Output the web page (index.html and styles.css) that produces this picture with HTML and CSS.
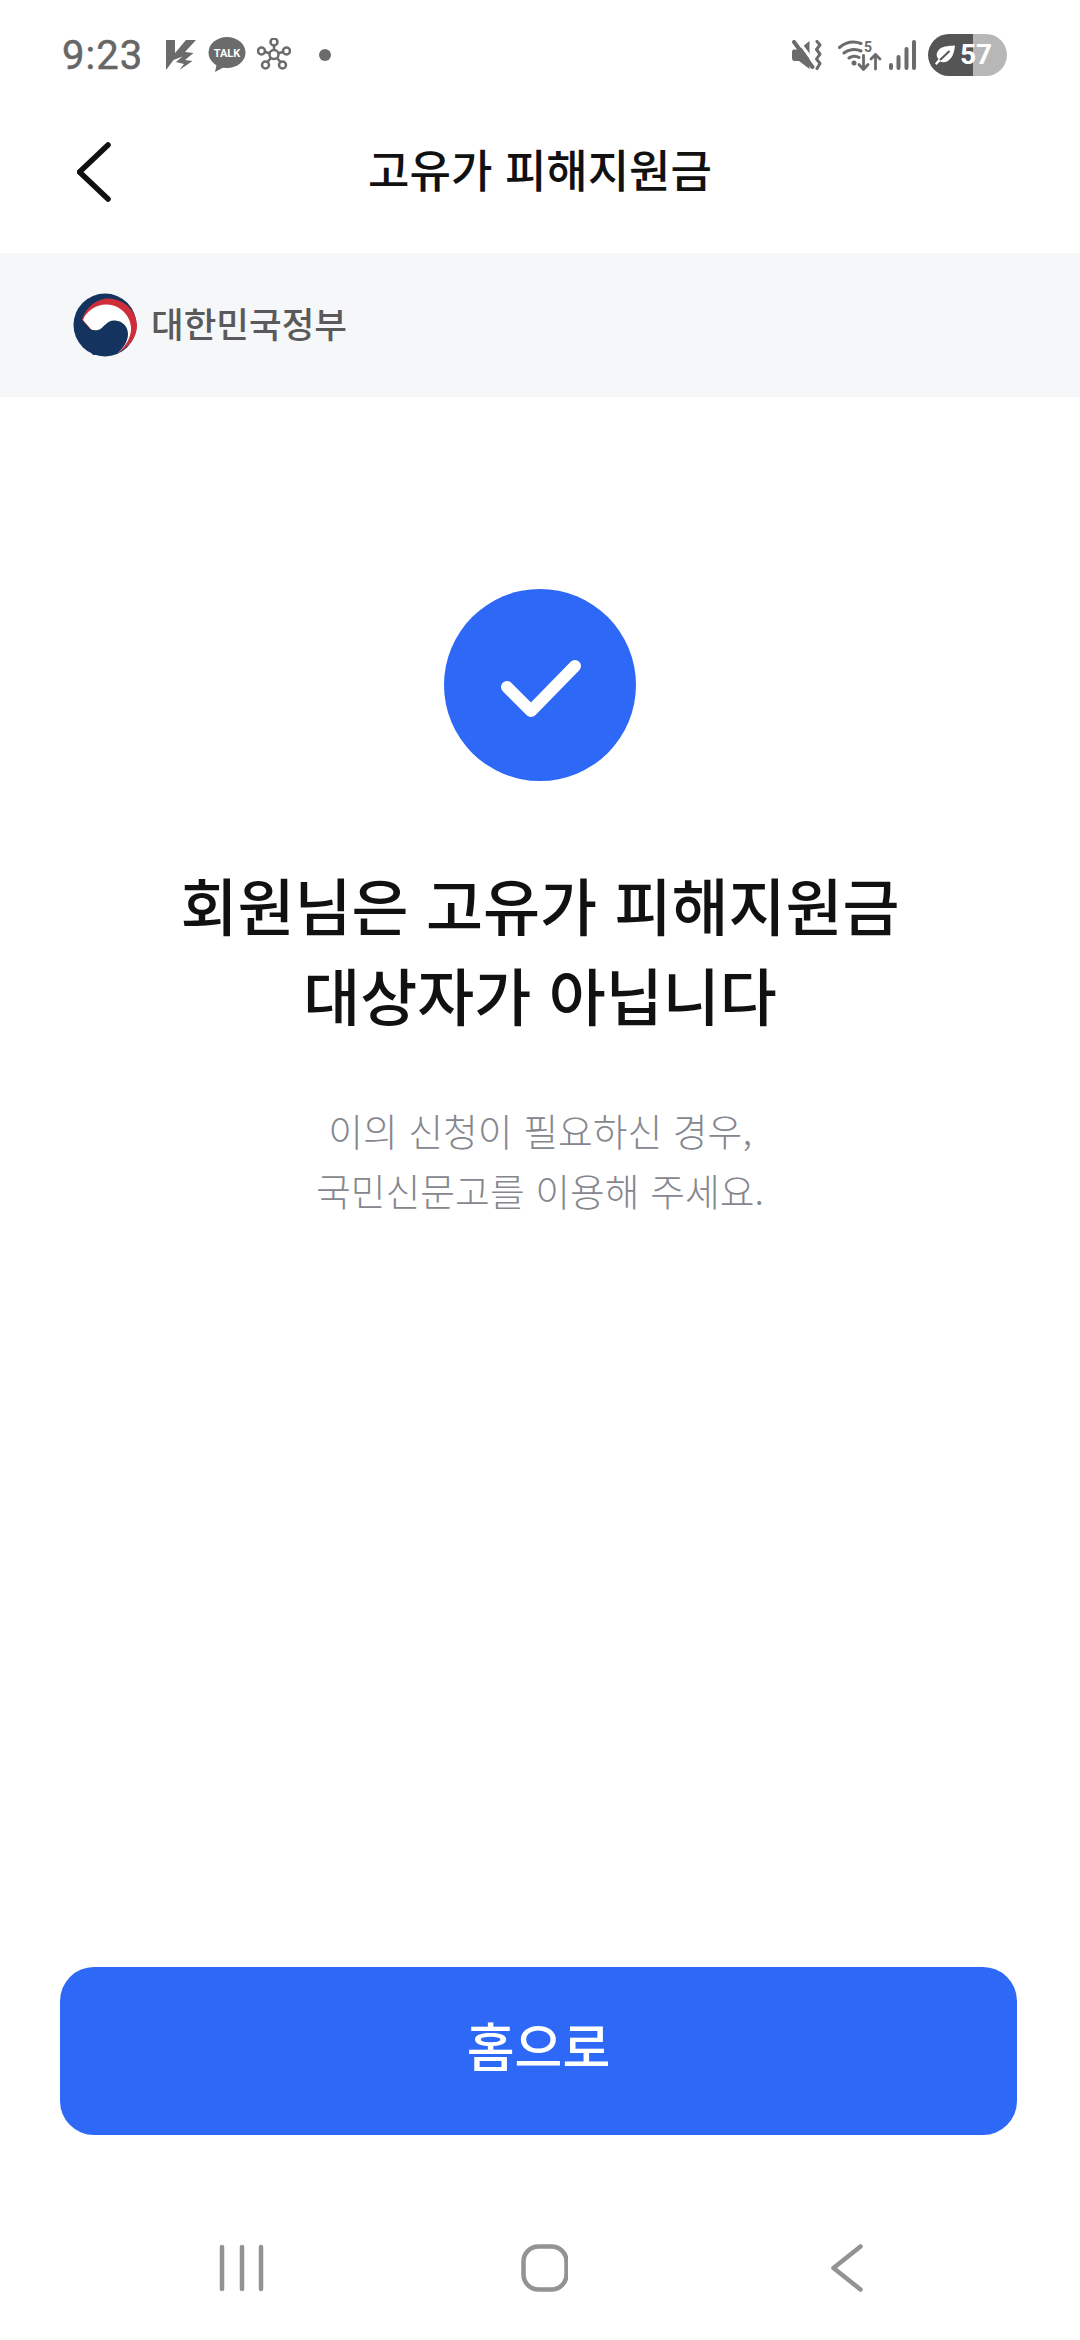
FILE: index.html
```html
<!DOCTYPE html>
<html lang="ko">
<head>
    <meta charset="UTF-8">
    <meta name="viewport" content="width=device-width, initial-scale=1.0">
    <title>고유가 피해지원금</title>
    <link rel="stylesheet" href="styles.css">
</head>
<body>
    <div class="status-bar">
        <span class="time">9:23</span>
        <svg class="st-bolt" width="30" height="30" viewBox="0 0 30 30">
            <path d="M0 0H9V13L20 0H30L19 12L27.500 13L19 20L26.500 21L13.500 30L18 24L10 22L16.500 16.500L7.500 20L0 30Z"/>
        </svg>
        <svg class="st-talk" width="38" height="36" viewBox="0 0 38 36">
            <ellipse cx="19" cy="15.500" rx="18.500" ry="15.500"/>
            <path d="M9 26L7 35L18 29Z"/>
            <text x="19" y="20" text-anchor="middle" class="talk-text">TALK</text>
        </svg>
        <svg class="st-hub" width="34" height="34" viewBox="0 0 34 34">
            <g class="hub-lines">
                <circle cx="17" cy="16.500" r="4.500"/>
                <circle cx="17" cy="4" r="3.500"/>
                <circle cx="4.500" cy="13" r="3.500"/>
                <circle cx="29.500" cy="13" r="3.500"/>
                <circle cx="8.500" cy="27" r="3.500"/>
                <circle cx="25.500" cy="27" r="3.500"/>
                <path d="M17 7.500V12M8 14L12.800 15.200M26 14L21.200 15.200M10.500 24L14 20M23.500 24L20 20"/>
            </g>
        </svg>
        <span class="st-dot"></span>
        <div class="status-right">
            <svg width="30" height="30" viewBox="0 0 30 30">
                <path d="M0 12C0 10 1 9.500 2.500 9.500H7L17.500 1V29L7 21H2.500C1 21 0 20 0 18Z"/>
                <path d="M5 -1L24 25" class="st-cut"/>
                <path d="M2 2L20.500 27" class="st-line"/>
                <path d="M25 1.500L28 5L24.500 9.500L28 14L24.500 19L28 23.500L25 28.500" class="st-line thin"/>
            </svg>
            <svg class="st-wifi" width="44" height="32" viewBox="0 0 44 32">
                <path d="M1.500 8.500C8 3 16 2 23 4.500M6 14C10 10.500 17 9.500 23 12M11 19C13.500 17 18 16.500 21 18.500" class="st-line thin"/>
                <circle cx="16" cy="24" r="2.500"/>
                <text x="26" y="12.500" class="wifi-five">5</text>
                <path d="M25.500 16.500V30M21 25.500L25.500 30.500L30 25.500" class="st-line arrow"/>
                <path d="M37.500 30V15.500M33 20L37.500 15.500L42 20" class="st-line arrow"/>
            </svg>
            <svg class="st-signal" width="27" height="30" viewBox="0 0 27 30">
                <rect x="0" y="23" width="4" height="7" rx="2"/>
                <rect x="7.500" y="15" width="4" height="15" rx="2"/>
                <rect x="15.500" y="7" width="4" height="23" rx="2"/>
                <rect x="23" y="0" width="4" height="30" rx="2"/>
            </svg>
            <div class="battery">
                <svg class="leaf" width="20" height="20" viewBox="0 0 20 20">
                    <path d="M20 0.500C13 1 6 1 3 6C1 9 1.500 12 3.500 14L0 18.500L1.500 20L5 16.500C9 18 13 17 16 13C18.500 10 19.500 5 20 0.500Z"/>
                    <path d="M14.500 6L5 15" class="leaf-vein"/>
                </svg>
                <span class="battery-num">57</span>
            </div>
        </div>
    </div>

    <header class="top-bar">
        <svg class="back-icon" width="34" height="60" viewBox="0 0 34 60">
            <path d="M31 3L2.500 30L31 57"/>
        </svg>
        <h1>고유가 피해지원금</h1>
    </header>

    <div class="gov-band">
        <svg class="gov-logo" width="64" height="64" viewBox="0 0 64 64">
            <circle cx="32" cy="32" r="31.500" fill="#14335f"/>
            <path d="M9 27C12 15 24 5 36 5.500C51 6 64 18 64 33C64 44 56 54 45 60L30 50Z" fill="#cd2e3a"/>
            <path d="M10 27C13 18 24 11 34 11.500C47 12 57 22 58 34C58.500 44 53 53 45 60L30 50Z" fill="#ffffff"/>
            <path d="M10 27C11 34 18 38.500 25 37C31 35.500 33 27 42 27.500C50 28 55 34 55 41C55 48 51 54 45 60L20 62L4 40Z" fill="#14335f"/>
        </svg>
        <span class="gov-name">대한민국정부</span>
    </div>

    <main class="result">
        <div class="check-circle">
            <svg width="192" height="192" viewBox="0 0 192 192">
                <path d="M63 98L87 122L131 77"/>
            </svg>
        </div>
        <h2>회원님은 고유가 피해지원금<br>대상자가 아닙니다</h2>
        <p>이의 신청이 필요하신 경우,<br>국민신문고를 이용해 주세요.</p>
    </main>

    <div class="bottom-action">
        <button type="button">홈으로</button>
    </div>

    <nav class="nav-bar">
        <svg width="48" height="48" viewBox="0 0 48 48">
            <path d="M4 3V45M24 3V45M43 3V45"/>
        </svg>
        <svg width="48" height="48" viewBox="0 0 48 48">
            <rect x="3.500" y="2.500" width="43" height="43" rx="15"/>
        </svg>
        <svg width="48" height="48" viewBox="0 0 48 48">
            <path d="M38.500 2.500L11.500 24L38.500 45.500"/>
        </svg>
    </nav>
</body>
</html>
```

FILE: styles.css
```css
* {
    box-sizing: border-box;
}
body {
    font-family: "Noto Sans CJK KR", "Noto Sans", sans-serif;
    display: flex;
    flex-direction: column;
    width: 1080px;
    height: 2340px;
    margin: 0;
    background-color: #ffffff;
    overflow: hidden;
}

/* status bar */
.status-bar {
    display: flex;
    align-items: center;
    height: 88px;
    padding: 22px 73px 0 62px;
    fill: #6b6b6b;
}
.time {
    width: 80px;
    font-family: Roboto, sans-serif;
    font-size: 40px;
    font-weight: 400;
    letter-spacing: 1px;
    color: #666666;
    -webkit-text-stroke: 0.5px #666666;
}
.st-bolt {
    margin-left: 24px;
}
.st-talk {
    margin-left: 12px;
}
.talk-text {
    font-family: Roboto, sans-serif;
    font-size: 11px;
    font-weight: 700;
    fill: #ffffff;
}
.st-hub {
    margin-left: 11px;
}
.hub-lines {
    fill: none;
    stroke: #6b6b6b;
    stroke-width: 2.500;
}
.st-dot {
    width: 12px;
    height: 12px;
    margin-left: 28px;
    border-radius: 50%;
    background: #6b6b6b;
}
.status-right {
    display: flex;
    align-items: center;
    margin-left: auto;
}
.st-cut {
    fill: none;
    stroke: #ffffff;
    stroke-width: 3;
}
.st-line {
    fill: none;
    stroke: #6b6b6b;
    stroke-width: 4;
    stroke-linecap: round;
    stroke-linejoin: round;
}
.st-line.thin {
    stroke-width: 3;
}
.st-line.arrow {
    stroke-width: 2.800;
}
.wifi-five {
    font-family: Roboto, sans-serif;
    font-size: 14px;
    font-weight: 700;
}
.st-wifi {
    margin-left: 16px;
}
.st-signal {
    margin-left: 7px;
}
.battery {
    display: flex;
    align-items: center;
    width: 79px;
    height: 42px;
    margin-left: 12px;
    padding-left: 7px;
    border-radius: 21px;
    background: linear-gradient(90deg, #555555 45px, #b7b7b7 45px);
}
.leaf {
    fill: #ffffff;
}
.leaf-vein {
    fill: none;
    stroke: #555555;
    stroke-width: 2;
}
.battery-num {
    margin-left: 5px;
    font-family: Roboto, sans-serif;
    font-size: 28px;
    font-weight: 700;
    line-height: 1;
    color: #ffffff;
}

/* header */
.top-bar {
    position: relative;
    display: flex;
    align-items: center;
    justify-content: center;
    height: 165px;
}
.back-icon {
    position: absolute;
    left: 77px;
    top: 54px;
    fill: none;
    stroke: #111111;
    stroke-width: 5.500;
    stroke-linecap: round;
    stroke-linejoin: round;
}
.top-bar h1 {
    margin: 0 0 5px;
    font-size: 45px;
    font-weight: 500;
    color: #111111;
}

.gov-band {
    display: flex;
    align-items: center;
    height: 144px;
    padding-left: 73px;
    background-color: #f6f7f9;
}
.gov-name {
    margin: 0 0 6px 14px;
    font-size: 35.500px;
    font-weight: 500;
    color: #5a5a5a;
}

/* result */
.result {
    flex: 1;
    display: flex;
    flex-direction: column;
    align-items: center;
    padding-top: 192px;
    text-align: center;
}
.check-circle {
    width: 192px;
    height: 192px;
    border-radius: 50%;
    background-color: #2d69f6;
}
.check-circle svg {
    display: block;
    fill: none;
    stroke: #ffffff;
    stroke-width: 12;
    stroke-linecap: round;
    stroke-linejoin: round;
}
.result h2 {
    margin: 78px 0 0;
    font-size: 62px;
    font-weight: 500;
    line-height: 90px;
    color: #111111;
}
.result p {
    margin: 61px 0 0;
    font-size: 37.800px;
    font-weight: 300;
    line-height: 60px;
    color: #85878e;
}

.bottom-action {
    padding: 0 63px 0 60px;
}
.bottom-action button {
    display: block;
    width: 100%;
    height: 168px;
    padding: 0 0 13px;
    font-family: inherit;
    font-size: 52px;
    font-weight: 500;
    color: white;
    background-color: #2d69f6;
    border: none;
    border-radius: 34px;
}

.nav-bar {
    display: flex;
    justify-content: space-between;
    height: 205px;
    padding: 109px 210px 0 218px;
}
.nav-bar svg {
    fill: none;
    stroke: #939393;
    stroke-width: 4.500;
    stroke-linecap: round;
    stroke-linejoin: round;
}
```
